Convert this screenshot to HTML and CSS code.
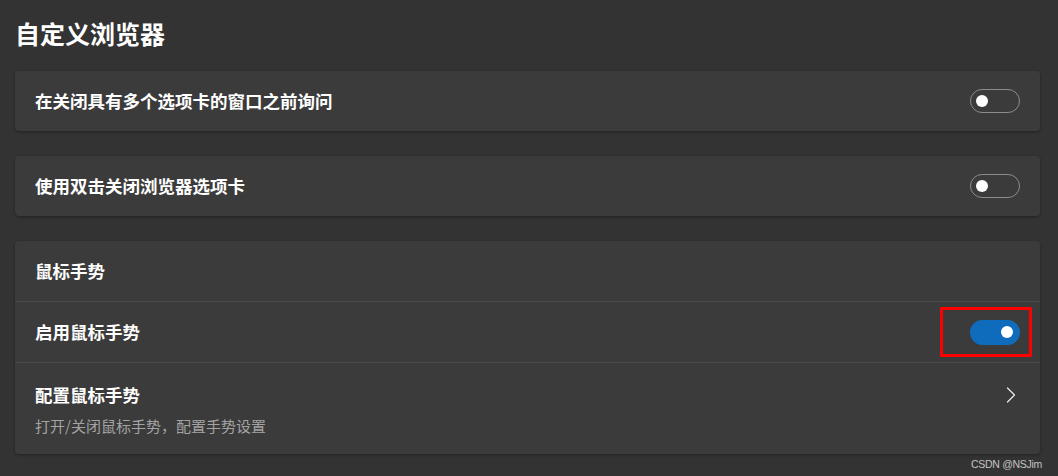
FILE: index.html
```html
<!DOCTYPE html>
<html lang="zh-CN">
<head>
<meta charset="utf-8">
<title>自定义浏览器</title>
<link rel="stylesheet" href="styles.css">
</head>
<body>
  <main class="page">
    <h1 class="page-title">自定义浏览器</h1>

    <section class="card">
      <div class="row">
        <span class="label">在关闭具有多个选项卡的窗口之前询问</span>
        <span class="toggle"><span class="knob"></span></span>
      </div>
    </section>

    <section class="card">
      <div class="row">
        <span class="label">使用双击关闭浏览器选项卡</span>
        <span class="toggle"><span class="knob"></span></span>
      </div>
    </section>

    <section class="card">
      <div class="row">
        <span class="label">鼠标手势</span>
      </div>
      <div class="row divided">
        <span class="label">启用鼠标手势</span>
        <span class="highlight-wrap">
          <span class="toggle on"><span class="knob"></span></span>
          <span class="highlight"></span>
        </span>
      </div>
      <div class="row divided tall">
        <div class="text">
          <span class="label">配置鼠标手势</span>
          <span class="sub">打开/关闭鼠标手势，配置手势设置</span>
        </div>
        <svg class="chevron" width="10" height="16" viewBox="0 0 10 16" aria-hidden="true">
          <path d="M1.5 1 L8.5 8 L1.5 15" fill="none" stroke="#e6e6e6" stroke-width="1.3" stroke-linecap="round" stroke-linejoin="round"/>
        </svg>
      </div>
    </section>
  </main>
  <div class="watermark">CSDN @NSJim</div>
</body>
</html>
```

FILE: styles.css
```css
html, body {
  margin: 0;
  padding: 0;
  background: #333333;
}

body {
  font-family: "Noto Sans CJK SC", "Noto Sans", sans-serif;
  color: #ffffff;
  width: 1058px;
  height: 476px;
  overflow: hidden;
  position: relative;
}

.page {
  padding: 16px 18px 0 15px;
}

.page-title {
  margin: 0 0 20px 0;
  font-size: 25px;
  line-height: 35px;
  font-weight: 700;
  letter-spacing: 0;
}

.card {
  background: #3b3b3b;
  border-radius: 4px;
  box-shadow: 0 1px 3px rgba(0, 0, 0, 0.35);
  margin-bottom: 25px;
}

.row {
  display: flex;
  align-items: center;
  justify-content: space-between;
  height: 60px;
  padding: 0 20px 0 20px;
}

.row.divided {
  border-top: 1px solid #4a4a4a;
}

.row.tall {
  height: auto;
  align-items: flex-start;
  padding: 20px 24px 17px 20px;
}

.label {
  font-size: 17.5px;
  line-height: 24px;
  font-weight: 700;
}

.text {
  display: flex;
  flex-direction: column;
  gap: 8px;
}

.sub {
  font-size: 15px;
  line-height: 22px;
  color: #a3a3a3;
  font-weight: 400;
}

.chevron {
  margin-top: 4px;
}

.toggle {
  box-sizing: border-box;
  width: 50px;
  height: 24px;
  border-radius: 12px;
  border: 1px solid #8c8c8c;
  display: flex;
  align-items: center;
  padding-left: 5px;
}

.toggle .knob {
  width: 12px;
  height: 12px;
  border-radius: 50%;
  background: #ffffff;
}

.toggle.on {
  background: #0f6cbd;
  border-color: #0f6cbd;
  justify-content: flex-end;
  padding-left: 0;
  padding-right: 6px;
  height: 25px;
}

.highlight-wrap {
  position: relative;
  display: flex;
}

.highlight {
  position: absolute;
  left: -30px;
  right: -12px;
  top: -13px;
  bottom: -12px;
  border: 3px solid #ff0000;
}

.watermark {
  position: absolute;
  right: 16px;
  bottom: 5px;
  font-family: "Liberation Sans", Arial, sans-serif;
  font-size: 10.5px;
  letter-spacing: -0.3px;
  line-height: 14px;
  color: #c4c4c4;
}
```
